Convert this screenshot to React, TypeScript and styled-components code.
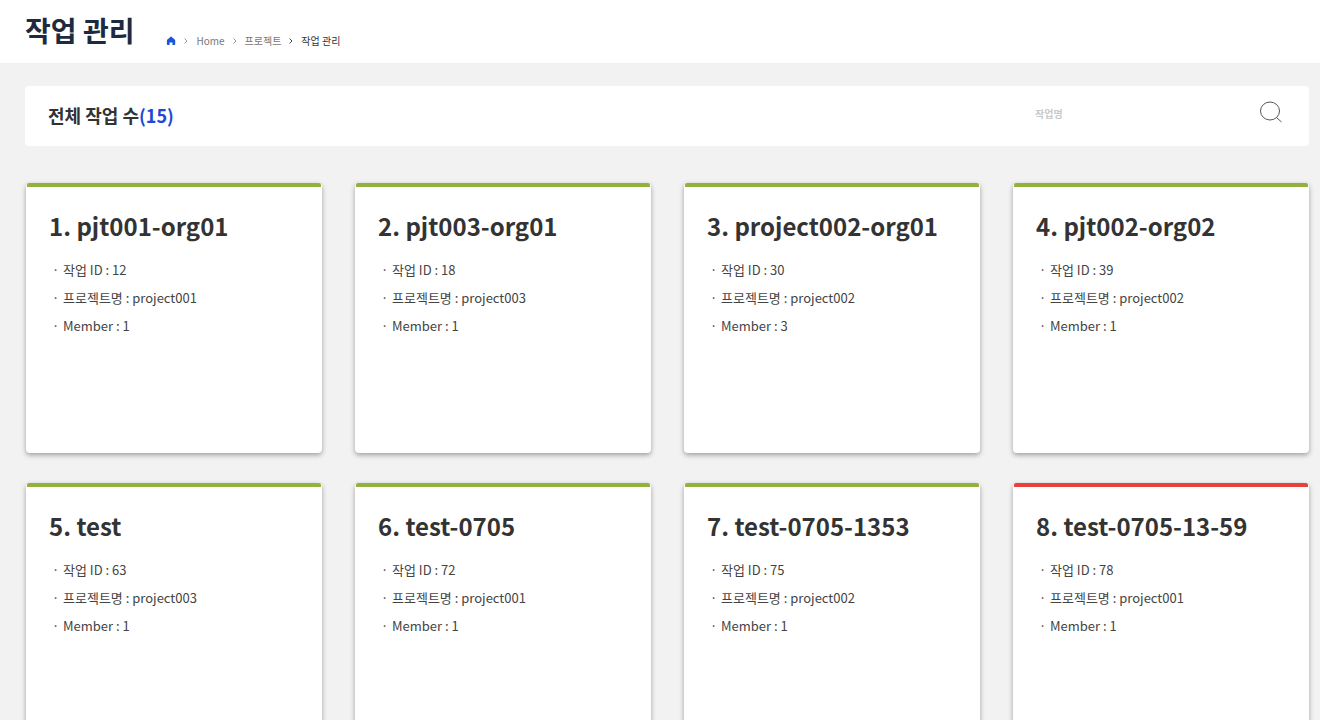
import React from "react";
import styled, { createGlobalStyle } from "styled-components";

const GlobalStyle = createGlobalStyle`
  *, *::before, *::after { box-sizing: border-box; }
  body {
    margin: 0;
    background: #f2f2f2;
    color: #333;
    font-family: "Noto Sans CJK KR", "Noto Sans", sans-serif;
  }
  h1, h2, h3, p, ul, ol { margin: 0; padding: 0; }
  ul, ol { list-style: none; }
`;

const Page = styled.div`
  height: 100vh;
  overflow-y: auto;
  scrollbar-width: none;
`;

const Header = styled.header`
  display: flex;
  align-items: flex-start;
  gap: 32px;
  height: 63px;
  padding: 9px 25px 0;
  background: #fff;
`;

const PageTitle = styled.h1`
  color: #1d2b41;
  font-size: 28px;
  line-height: 42px;
  font-weight: 700;
`;

const Crumbs = styled.ol`
  display: flex;
  align-items: center;
  gap: 8px;
  padding-top: 24px;
  font-size: 10px;
  line-height: 16px;
`;

const Crumb = styled.li<{ $current?: boolean }>`
  display: flex;
  align-items: center;
  gap: 8px;
  color: ${(p) => (p.$current ? "#333" : "#777")};
`;

const CrumbLink = styled.a`
  display: flex;
  color: inherit;
  text-decoration: none;
`;

const Content = styled.main`
  padding: 23px 11px 30px 25px;
`;

const Toolbar = styled.section`
  display: flex;
  align-items: center;
  justify-content: space-between;
  height: 60px;
  padding: 0 27px 4px 23px;
  border-radius: 4px;
  background: #fff;
`;

const Total = styled.h2`
  padding-top: 2px;
  font-size: 18px;
  line-height: 28px;
  font-weight: 700;
`;

const Count = styled.span`
  color: #1e49d6;
`;

const Search = styled.form`
  display: flex;
  align-items: center;
`;

const SearchInput = styled.input`
  width: 225px;
  height: 24px;
  padding: 0;
  border: 0;
  outline: 0;
  background: transparent;
  color: #333;
  font: 700 10px/24px "Noto Sans CJK KR", "Noto Sans", sans-serif;
  &::placeholder { color: #c8c8c8; opacity: 1; }
`;

const SearchButton = styled.button`
  display: flex;
  padding: 0 0 4px;
  border: 0;
  background: transparent;
  cursor: pointer;
`;

const Grid = styled.ul`
  display: grid;
  grid-template-columns: repeat(4, minmax(0, 1fr));
  gap: 30px 33px;
  padding: 37px 0 0 1px;
`;

const Card = styled.li<{ $failed?: boolean }>`
  height: 270px;
  padding-left: 23px;
  border-radius: 4px;
  background: #fff;
  box-shadow: 0 2px 5px rgba(0, 0, 0, 0.35);
  &::before {
    content: "";
    display: block;
    height: 4px;
    margin: 0 1px 0 -22px;
    border-radius: 2px 2px 0 0;
    background: ${(p) => (p.$failed ? "#e8413c" : "#92b23b")};
  }
`;

const CardTitle = styled.h3`
  padding-top: 19px;
  font-size: 24px;
  line-height: 40px;
  font-weight: 700;
`;

const Details = styled.ul`
  padding: 10px 0 0 3px;
  color: #444;
  font-size: 13px;
  line-height: 28px;
`;

const Detail = styled.li`
  display: flex;
  &::before {
    content: "·";
    width: 11px;
  }
`;

const jobs = [
  { name: "pjt001-org01", id: 12, project: "project001", members: 1 },
  { name: "pjt003-org01", id: 18, project: "project003", members: 1 },
  { name: "project002-org01", id: 30, project: "project002", members: 3 },
  { name: "pjt002-org02", id: 39, project: "project002", members: 1 },
  { name: "test", id: 63, project: "project003", members: 1 },
  { name: "test-0705", id: 72, project: "project001", members: 1 },
  { name: "test-0705-1353", id: 75, project: "project002", members: 1 },
  { name: "test-0705-13-59", id: 78, project: "project001", members: 1, failed: true },
];

const Chevron = ({ color = "#999" }: { color?: string }) => (
  <svg width="4" height="6" viewBox="0 0 4 6" fill="none" stroke={color} aria-hidden="true">
    <path d="M.5 .5 3 3 .5 5.500" />
  </svg>
);

export default function App() {
  return (
    <Page>
      <GlobalStyle />
      <Header>
        <PageTitle>작업 관리</PageTitle>
        <nav aria-label="breadcrumb">
          <Crumbs>
            <Crumb>
              <CrumbLink href="#" aria-label="Home">
                <svg width="10" height="10" viewBox="0 0 10 10" fill="#1c55dc" aria-hidden="true">
                  <path d="M5 .6c.3 0 .5.1.7.3l3 2.600c.3.3.5.6.5 1v3.800c0 .5-.3.700-.8.700H6.500V6.400H3.500V9H1.700c-.5 0-.8-.2-.8-.7V4.500c0-.4.2-.7.5-1l3-2.600C4.600.7 4.800.6 5 .6Z" />
                </svg>
              </CrumbLink>
            </Crumb>
            <Crumb>
              <Chevron />
              <CrumbLink href="#">Home</CrumbLink>
            </Crumb>
            <Crumb>
              <Chevron />
              <CrumbLink href="#">프로젝트</CrumbLink>
            </Crumb>
            <Crumb $current aria-current="page">
              <Chevron color="#444" />
              작업 관리
            </Crumb>
          </Crumbs>
        </nav>
      </Header>
      <Content>
        <Toolbar>
          <Total>
            전체 작업 수<Count>(15)</Count>
          </Total>
          <Search onSubmit={(e) => e.preventDefault()}>
            <SearchInput type="text" placeholder="작업명" aria-label="작업명" />
            <SearchButton type="submit" aria-label="검색">
              <svg width="22" height="22" viewBox="0 0 22 22" fill="none" stroke="#555" aria-hidden="true">
                <ellipse cx="10" cy="10" rx="9.500" ry="9" />
                <path d="m16.500 16.500 5 4.500" />
              </svg>
            </SearchButton>
          </Search>
        </Toolbar>
        <Grid>
          {jobs.map((job, i) => (
            <Card key={job.id} $failed={job.failed}>
              <CardTitle>{`${i + 1}. ${job.name}`}</CardTitle>
              <Details>
                <Detail>{`작업 ID : ${job.id}`}</Detail>
                <Detail>{`프로젝트명 : ${job.project}`}</Detail>
                <Detail>{`Member : ${job.members}`}</Detail>
              </Details>
            </Card>
          ))}
        </Grid>
      </Content>
    </Page>
  );
}
